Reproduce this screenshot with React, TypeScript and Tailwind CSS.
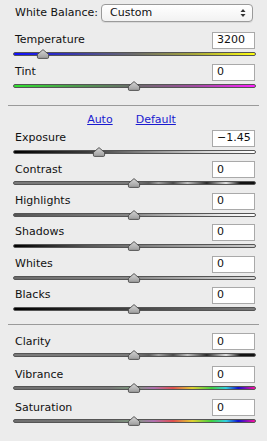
import React from "react";

type Slider = {
  label: string;
  value: string;
  pos: number; // thumb x in px from track left
  track: string;
};

const contrastTrack =
  "linear-gradient(to right, #7a7a7a 0%, #7a7a7a 50%, #5a5a5a 56%, #a0a0a0 60%, #4a4a4a 66%, #c0c0c0 72%, #2a2a2a 80%, #e0e0e0 88%, #111 94%, #111 100%)";
const colorTrack =
  "linear-gradient(to right, #6f6f6f 0%, #7a7a7a 40%, #7c9a7c 50%, #b070b0 58%, #e05050 66%, #e0d030 74%, #40d040 82%, #30d0e0 88%, #1010d0 93%, #ff10a0 100%)";

const basic: Slider[] = [
  {
    label: "Temperature",
    value: "3200",
    pos: 30,
    track: "linear-gradient(to right, #1010ff 0%, #3a3aa8 25%, #6b6b6b 50%, #a8a83a 75%, #ffff10 100%)",
  },
  {
    label: "Tint",
    value: "0",
    pos: 121,
    track: "linear-gradient(to right, #30e030 0%, #4c9c4c 25%, #6b6b6b 50%, #a04ca0 75%, #ff20ff 100%)",
  },
];

const tone: Slider[] = [
  {
    label: "Exposure",
    value: "\u22121.45",
    pos: 86,
    track: "linear-gradient(to right, #000 0%, #3a3a3a 30%, #8a8a8a 55%, #d8d8d8 80%, #fff 100%)",
  },
  { label: "Contrast", value: "0", pos: 121, track: contrastTrack },
  {
    label: "Highlights",
    value: "0",
    pos: 121,
    track: "linear-gradient(to right, #555 0%, #888 50%, #e8e8e8 85%, #fff 100%)",
  },
  {
    label: "Shadows",
    value: "0",
    pos: 121,
    track: "linear-gradient(to right, #000 0%, #555 30%, #8a8a8a 60%, #cfcfcf 100%)",
  },
  {
    label: "Whites",
    value: "0",
    pos: 121,
    track: "linear-gradient(to right, #6a6a6a 0%, #8a8a8a 50%, #dadada 100%)",
  },
  {
    label: "Blacks",
    value: "0",
    pos: 121,
    track: "linear-gradient(to right, #000 0%, #3a3a3a 40%, #7a7a7a 100%)",
  },
];

const presence: Slider[] = [
  { label: "Clarity", value: "0", pos: 121, track: contrastTrack },
  { label: "Vibrance", value: "0", pos: 121, track: colorTrack },
  { label: "Saturation", value: "0", pos: 121, track: colorTrack },
];

function Thumb({ left }: { left: number }) {
  return (
    <svg
      className="absolute top-[-3px]"
      style={{ left: left - 7 }}
      width="14"
      height="10"
      viewBox="0 0 14 10"
    >
      <defs>
        <linearGradient id="thumbFill" x1="0" y1="0" x2="0" y2="1">
          <stop offset="0" stopColor="#d6d6d6" />
          <stop offset="1" stopColor="#9c9c9c" />
        </linearGradient>
      </defs>
      <path
        d="M7 0.6 L12.6 5.4 L12.6 8.2 Q12.6 9.4 11.4 9.4 L2.6 9.4 Q1.4 9.4 1.4 8.2 L1.4 5.4 Z"
        fill="url(#thumbFill)"
        stroke="#4a4a4a"
        strokeWidth="0.9"
      />
    </svg>
  );
}

function SliderRow({ s, h }: { s: Slider; h: string }) {
  return (
    <div className={`flex shrink-0 flex-col ${h}`}>
      <div className="flex h-[17px] w-[243px] items-center justify-between pl-[2px] pr-[1px]">
        <span className="whitespace-nowrap text-[11px] text-[#111]">{s.label}</span>
        <div className="flex h-[17px] w-[43px] shrink-0 items-center whitespace-nowrap border border-[#a9a9a9] bg-white pl-[4px] text-[11px] text-[#111]">
          {s.value}
        </div>
      </div>
      <div className="relative mt-[3px] h-[4px] w-[243px]">
        <div
          className="h-[4px] w-full rounded-full border border-[#555]"
          style={{ background: s.track }}
        />
        <Thumb left={s.pos} />
      </div>
    </div>
  );
}

export default function App() {
  return (
    <div
      className="h-[441px] w-[267px] overflow-hidden bg-[#ececec]"
      style={{ fontFamily: '"DejaVu Sans", "Liberation Sans", sans-serif' }}
    >
      {/* White balance */}
      <div className="flex items-center pl-[15px] pt-[4px]">
        <span className="w-[86px] shrink-0 whitespace-nowrap text-[11px] text-[#111]">White Balance:</span>
        <div className="flex h-[18px] w-[152px] shrink-0 items-center justify-between rounded-[4px] border border-[#9a9a9a] bg-gradient-to-b from-white to-[#f2f2f2] pl-[8px] pr-[6px] text-[11px] text-[#111] shadow-[0_1px_0_rgba(0,0,0,0.08)]">
          <span>Custom</span>
          <svg width="6" height="10" viewBox="0 0 6 10">
            <path d="M0.5 4 L3 1 L5.5 4 Z" fill="#333" />
            <path d="M0.5 6 L3 9 L5.5 6 Z" fill="#333" />
          </svg>
        </div>
      </div>

      <div className="flex flex-col pl-[13px] pt-[10px]">
        {basic.map((s) => (
          <SliderRow key={s.label} s={s} h="h-[32px]" />
        ))}
      </div>

      <div className="mx-[8px] mt-[9px] h-px bg-[#9a9a9a]" />

      <div className="flex h-[24px] items-center justify-center gap-[23px] pr-[4px] pt-[4px] text-[11px] text-[#1a1ad0] underline">
        <span>Auto</span>
        <span>Default</span>
      </div>

      <div className="flex flex-col pl-[13px]">
        {tone.map((s) => (
          <SliderRow key={s.label} s={s} h="h-[31.4px]" />
        ))}
      </div>

      <div className="mx-[8px] mt-[6px] h-px bg-[#9a9a9a]" />

      <div className="flex flex-col pl-[13px] pt-[8px]">
        {presence.map((s) => (
          <SliderRow key={s.label} s={s} h="h-[33px]" />
        ))}
      </div>
    </div>
  );
}
